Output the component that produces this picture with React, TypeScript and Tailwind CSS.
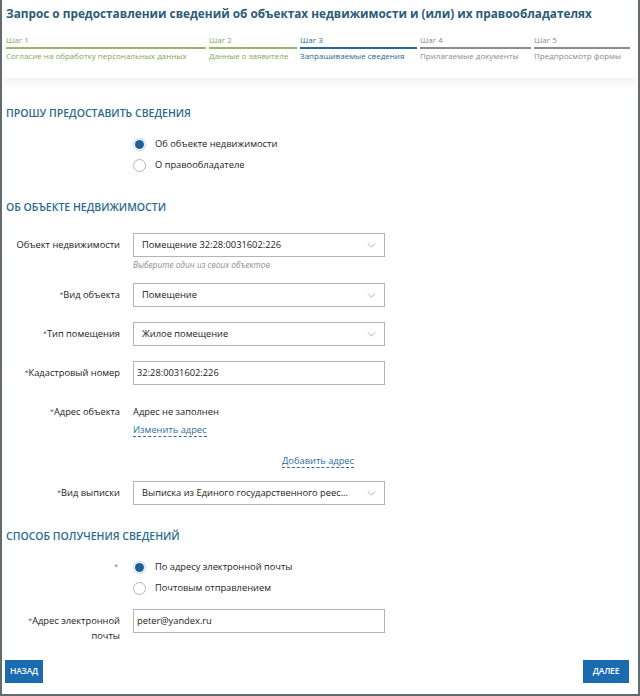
import { ChevronDown } from "lucide-react";

const steps = [
  { n: "Шаг 1", title: "Согласие на обработку персональных данных", w: "w-[200px]", state: "done" },
  { n: "Шаг 2", title: "Данные о заявителе", w: "w-[88px]", state: "done" },
  { n: "Шаг 3", title: "Запрашиваемые сведения", w: "w-[117px]", state: "active" },
  { n: "Шаг 4", title: "Прилагаемые документы", w: "w-[111px]", state: "todo" },
  { n: "Шаг 5", title: "Предпросмотр формы", w: "w-[96px]", state: "todo" },
];

function Step({ n, title, w, state }: { n: string; title: string; w: string; state: string }) {
  const text =
    state === "done" ? "text-[#86a35a]" : state === "active" ? "text-[#2a6792]" : "text-[#8a8a8a]";
  const line =
    state === "done" ? "bg-[#9db46f]" : state === "active" ? "bg-[#2a6792]" : "bg-[#8c8c8c]";
  return (
    <div className={`${w} shrink-0`}>
      <div className={`text-[8px] leading-[12px] ${text}`}>{n}</div>
      <div className={`h-[2px] mt-px ${line}`} />
      <div className={`text-[8px] leading-[12px] mt-px whitespace-nowrap ${text}`}>{title}</div>
    </div>
  );
}

function Heading({ children, className = "" }: { children: string; className?: string }) {
  return (
    <div className={`pl-[4px] text-[10.5px] leading-[14px] font-semibold uppercase text-[#2b6a8e] ${className}`}>
      {children}
    </div>
  );
}

function Label({ text, req = true }: { text: string; req?: boolean }) {
  return (
    <div className="w-[118px] shrink-0 text-right text-[9.3px] leading-[14px] text-[#222]">
      {req && <span className="text-[7px] align-top text-[#555]">*</span>}
      {text}
    </div>
  );
}

function Select({ value }: { value: string }) {
  return (
    <div className="w-[252px] h-[24px] border border-[#b3b3b3] bg-white flex items-center justify-between pl-[8px] pr-[6px]">
      <span className="text-[9.3px] text-[#222] truncate">{value}</span>
      <ChevronDown size={13} strokeWidth={1.3} className="text-[#8a8a8a] shrink-0" />
    </div>
  );
}

function TextInput({ value }: { value: string }) {
  return (
    <div className="w-[252px] h-[24px] border border-[#b3b3b3] bg-white flex items-center pl-[3px]">
      <span className="text-[9.3px] text-[#222]">{value}</span>
    </div>
  );
}

function Radio({ label, checked }: { label: string; checked?: boolean }) {
  return (
    <div className="flex items-center h-[14px]">
      {checked ? (
        <span className="w-[13px] h-[13px] rounded-full border border-[#b9d4ea] flex items-center justify-center">
          <span className="w-[9px] h-[9px] rounded-full bg-[#1f5f96]" />
        </span>
      ) : (
        <span className="w-[13px] h-[13px] rounded-full border border-[#b5b5b5] bg-white" />
      )}
      <span className="ml-[9px] text-[9.3px] text-[#222]">{label}</span>
    </div>
  );
}

export default function App() {
  return (
    <div
      className="w-[640px] h-[696px] bg-white border-x-2 border-b-2 border-[#5f6d6c] flex flex-col overflow-hidden"
      style={{ fontFamily: '"Open Sans", "Noto Sans", sans-serif' }}
    >
      <div className="h-[78px] shrink-0 px-[4px] pt-[5px] shadow-[0_5px_8px_rgba(0,0,0,0.06)]">
        <div className="text-[11.8px] leading-[16px] font-bold text-[#2b5b78] whitespace-nowrap">
          Запрос о предоставлении сведений об объектах недвижимости и (или) их правообладателях
        </div>
        <div className="flex gap-[3px] mt-[13px]">
          {steps.map((s) => (
            <Step key={s.n} {...s} />
          ))}
        </div>
      </div>

      <Heading className="mt-[28px]">Прошу предоставить сведения</Heading>
      <div className="ml-[131px] mt-[17px] flex flex-col gap-[7px]">
        <Radio label="Об объекте недвижимости" checked />
        <Radio label="О правообладателе" />
      </div>

      <Heading className="mt-[28px]">Об объекте недвижимости</Heading>

      <div className="flex items-center gap-[13px] mt-[19px]">
        <Label text="Объект недвижимости" req={false} />
        <Select value="Помещение 32:28:0031602:226" />
      </div>
      <div className="ml-[131px] mt-[2px] text-[8.3px] leading-[12px] italic text-[#8d8d8d]">
        Выберите один из своих объектов
      </div>

      <div className="flex items-center gap-[13px] mt-[12px]">
        <Label text="Вид объекта" />
        <Select value="Помещение" />
      </div>
      <div className="flex items-center gap-[13px] mt-[15px]">
        <Label text="Тип помещения" />
        <Select value="Жилое помещение" />
      </div>
      <div className="flex items-center gap-[13px] mt-[15px]">
        <Label text="Кадастровый номер" />
        <TextInput value="32:28:0031602:226" />
      </div>

      <div className="flex gap-[13px] mt-[20px]">
        <Label text="Адрес объекта" />
        <div className="flex flex-col items-start">
          <div className="text-[9.3px] leading-[14px] text-[#222]">Адрес не заполнен</div>
          <span className="mt-[4px] text-[9.3px] leading-[13px] text-[#2d6e9e] border-b border-dashed border-[#2d6e9e]">
            Изменить адрес
          </span>
          <span className="ml-[149px] mt-[17px] text-[9.3px] leading-[13px] text-[#2d6e9e] border-b border-dashed border-[#2d6e9e]">
            Добавить адрес
          </span>
        </div>
      </div>

      <div className="flex items-center gap-[13px] mt-[13px]">
        <Label text="Вид выписки" />
        <Select value="Выписка из Единого государственного реес..." />
      </div>

      <Heading className="mt-[24px]">Способ получения сведений</Heading>
      <div className="flex gap-[13px] mt-[17px]">
        <div className="w-[118px] shrink-0 text-right text-[7px] leading-[14px] text-[#777] pr-[2px]">*</div>
        <div className="flex flex-col gap-[7px]">
          <Radio label="По адресу электронной почты" checked />
          <Radio label="Почтовым отправлением" />
        </div>
      </div>

      <div className="flex items-start gap-[13px] mt-[14px]">
        <div className="w-[118px] shrink-0 text-right text-[9.3px] leading-[15px] text-[#222] pt-[4px]">
          <span className="text-[7px] align-top text-[#555]">*</span>Адрес электронной
          <br />
          почты
        </div>
        <TextInput value="peter@yandex.ru" />
      </div>

      <div className="mt-auto mb-[11px] flex justify-between pl-[3px] pr-[9px]">
        <button className="h-[23px] w-[38px] bg-[#1b6bb0] text-white text-[8.5px] font-semibold uppercase tracking-[-0.2px]">
          Назад
        </button>
        <button className="h-[23px] w-[46px] bg-[#1b6bb0] text-white text-[8.5px] font-semibold uppercase tracking-[-0.2px]">
          Далее
        </button>
      </div>
    </div>
  );
}
